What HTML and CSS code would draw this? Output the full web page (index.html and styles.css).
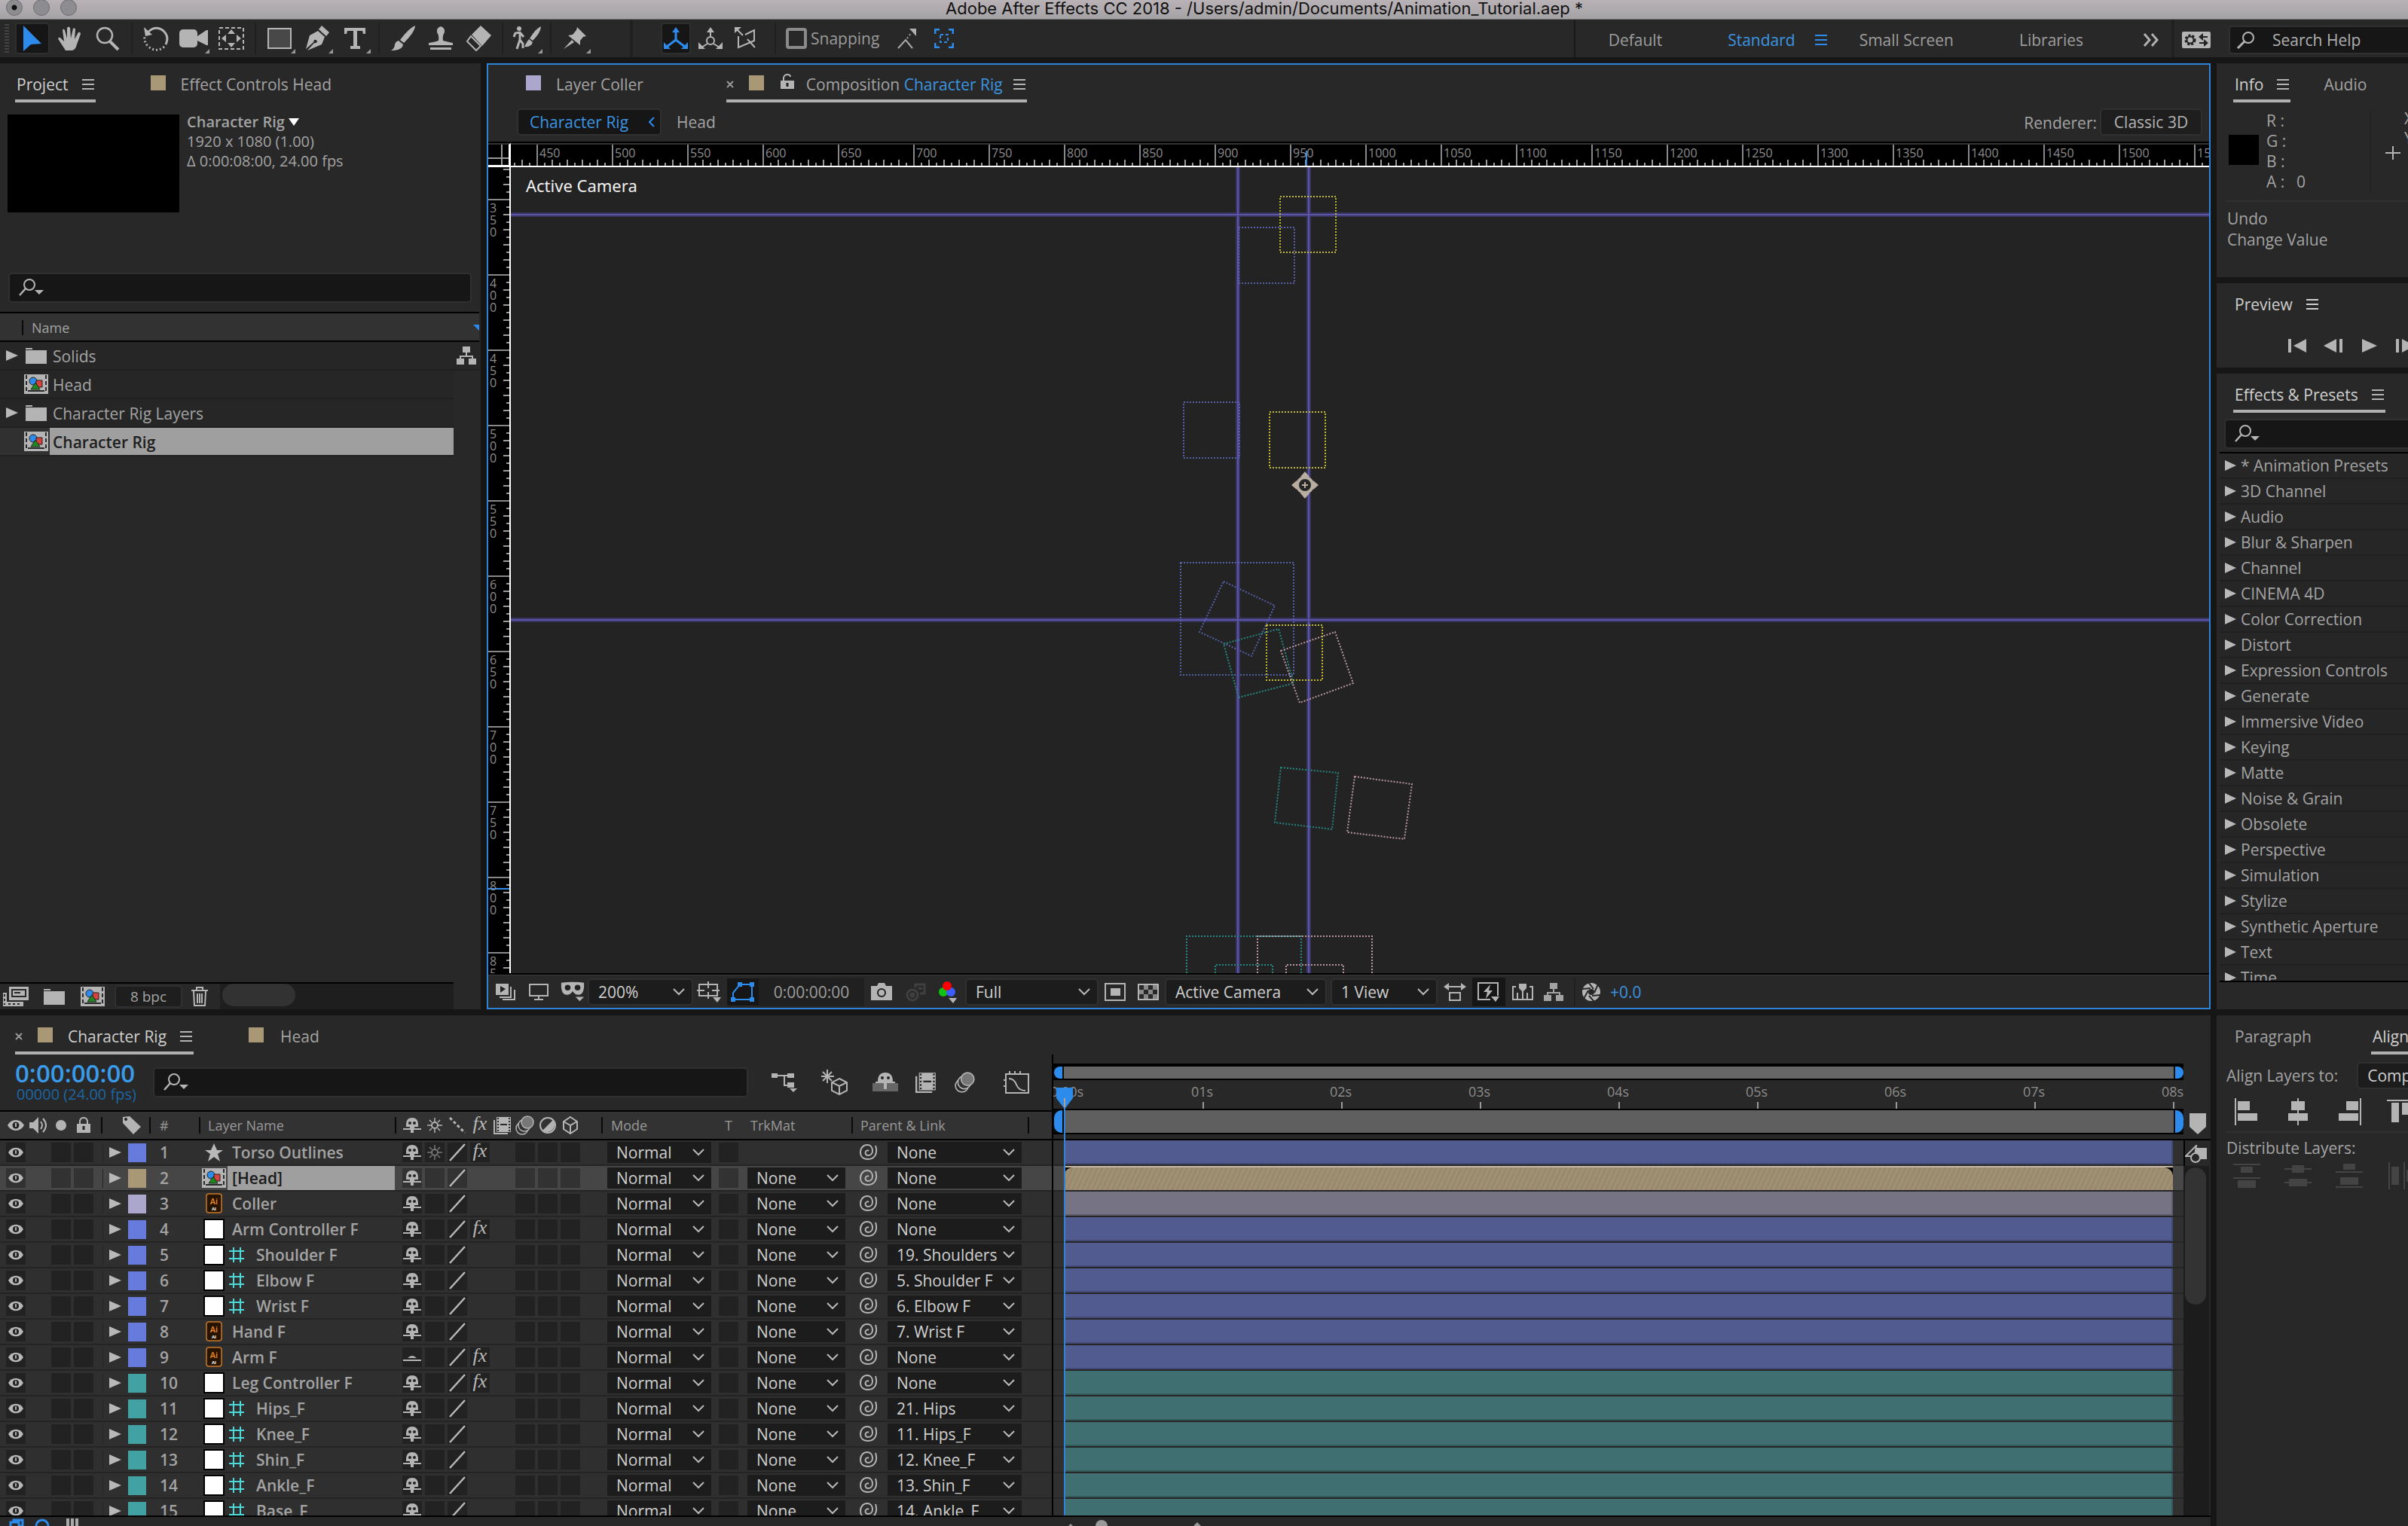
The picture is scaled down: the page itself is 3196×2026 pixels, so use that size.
FILE: index.html
```html
<!DOCTYPE html>
<html lang="en">
<head>
<meta charset="utf-8">
<title>Adobe After Effects CC 2018</title>
<link rel="stylesheet" href="styles.css">
</head>
<body>
<svg class="sprite" aria-hidden="true">
  <symbol id="i-menu" viewBox="0 0 16 14"><path d="M0 1h16M0 7h16M0 13h16" stroke="currentColor" stroke-width="2"/></symbol>
  <symbol id="i-search" viewBox="0 0 34 24"><circle cx="14" cy="8" r="7" fill="none" stroke="currentColor" stroke-width="2"/><path d="M9 13 1 22" stroke="currentColor" stroke-width="2.500"/><path d="M21 15h12l-6 6z" fill="currentColor"/></symbol>
  <symbol id="i-comp" viewBox="0 0 32 26"><path fill="#b4b4b4" d="M0 0h32v26H0z"/><path stroke="#2a2a2a" stroke-width="2" stroke-dasharray="5 3" d="M3 1v24M29 1v24"/><path stroke="#2a2a2a" stroke-width="2" d="M5 22h22"/><circle cx="12" cy="9" r="5" fill="#2d8ceb" stroke="#222"/><path fill="#d9413c" stroke="#222" d="M16 8h8v9h-8z"/><path fill="#1d8a1d" stroke="#222" d="M15 11l6 9H9z"/></symbol>
  <symbol id="i-folder" viewBox="0 0 28 22"><path fill="#b4b4b4" d="M0 1h9v2H0zM0 4h28v18H0z"/></symbol>
  <symbol id="i-flow" viewBox="0 0 26 24"><path fill="currentColor" d="M8 0h10v8H8zM0 16h10v8H0zM16 16h10v8H16z"/><path fill="none" stroke="currentColor" stroke-width="2" d="M13 8v5M5 17v-4h16v4"/></symbol>
  <symbol id="i-eye" viewBox="0 0 22 14"><path fill="#b8b8b8" d="M0 7Q4 0 11 0t11 7q-4 7-11 7T0 7z"/><circle cx="11" cy="7" r="4.500" fill="#242424"/><path d="M11 4v5" stroke="#b8b8b8" stroke-width="2"/></symbol>
  <symbol id="i-shy" viewBox="0 0 24 22"><path fill="#b4b4b4" d="M4 10Q4 1 12 1t8 9v3h-5v2h9v2H14v4h-4v-4H0v-2h9v-2H4z"/><circle cx="9" cy="8" r="2" fill="#222"/><circle cx="15" cy="8" r="2" fill="#222"/></symbol>
  <symbol id="i-shyon" viewBox="0 0 24 22"><path fill="#b4b4b4" d="M0 14h24v2H0zM6 12q6-6 12 0z"/></symbol>
  <symbol id="i-sun" viewBox="0 0 20 20"><circle cx="10" cy="10" r="4" fill="none" stroke="currentColor" stroke-width="2"/><path stroke="currentColor" stroke-width="1.500" d="M10 0v5M10 15v5M0 10h5M15 10h5M3 3l3 3M14 14l3 3M17 3l-3 3M3 17l3-3"/></symbol>
  <symbol id="i-slash" viewBox="0 0 24 24"><path stroke="#b8b8b8" stroke-width="2.500" d="M2 23 22 1"/></symbol>
  <symbol id="i-film" viewBox="0 0 24 24"><path fill="none" stroke="currentColor" stroke-width="2" d="M1 5v18h18"/><path fill="currentColor" d="M4 1h19v20H4z"/><path stroke="#2a2a2a" stroke-width="2" stroke-dasharray="2 2" d="M6 2v18M21 2v18"/><path stroke="#2a2a2a" stroke-width="2" d="M9 11h9"/></symbol>
  <symbol id="i-blur" viewBox="0 0 26 26"><circle cx="9" cy="17" r="8" fill="none" stroke="currentColor" stroke-width="1.500"/><circle cx="12" cy="13" r="8" fill="#333" stroke="currentColor" stroke-width="1.500"/><circle cx="16" cy="9" r="8" fill="#777" stroke="currentColor" stroke-width="1.500"/></symbol>
  <symbol id="i-cube" viewBox="0 0 22 24"><path fill="none" stroke="currentColor" stroke-width="2" d="M11 1l9 6v10l-9 6-9-6V7zM2 7l9 5 9-5M11 12v11"/></symbol>
  <symbol id="i-null" viewBox="0 0 32 28"><path fill="#fff" stroke="#000" stroke-width="2" d="M3 1h26v26H3z"/></symbol>
  <symbol id="i-star" viewBox="0 0 32 28"><path fill="#b8b8b8" d="M16 2l4 9h8l-7 5 3 10-8-6-8 6 3-10-7-5h8z"/></symbol>
  <symbol id="i-ai" viewBox="0 0 32 28"><rect x="6" y="1" width="20" height="25" rx="3" fill="#261300" stroke="#c77a25" stroke-width="1.500"/><text x="16" y="15" text-anchor="middle" font-size="11" font-weight="600" fill="#f08a24">Ai</text><text x="16" y="23" text-anchor="middle" font-size="6" font-weight="700" fill="#fff">AI</text></symbol>
  <symbol id="i-hash" viewBox="0 0 20 20"><path stroke="#4fd8d8" stroke-width="2" d="M6 0v20M15 0v20M0 5h20M0 15h20"/></symbol>
  <symbol id="i-spiral" viewBox="0 0 24 22"><path fill="none" stroke="#b4b4b4" stroke-width="2" d="M21 2C24 11 21 20 11 20 4 20 1 16 1 11 1 5 5 1 10 1c5 0 7 4 7 8 0 4-3 6-6 6-3 0-4-3-3-5 1-2 3-2 4-1"/></symbol>
  <symbol id="i-tri" viewBox="0 0 16 14"><path fill="#b8b8b8" d="M0 0l16 7-16 7z"/></symbol>
</svg>

<header class="titlebar">
  <div class="lights"><i class="light light--dot"></i><i class="light"></i><i class="light"></i></div>
  <h1 class="titlebar__text">Adobe After Effects CC 2018 - /Users/admin/Documents/Animation_Tutorial.aep *</h1>
</header>

<div class="toolbar">
  <i class="grip"></i>
  <button class="tool tool--on" aria-label="Selection"><svg width="24" height="34" viewBox="0 0 24 34"><path fill="#2d8ceb" d="M0 0l24 24-14 1-10 9z"/></svg></button>
  <button class="tool" aria-label="Hand"><svg width="32" height="34" viewBox="0 0 32 34"><path fill="currentColor" d="M10 33 1 19q-2-4 2-3l5 5L6 6q1-3 3 0l3 11V3q2-3 4 0l1 14 3-13q2-2 3 1l-1 13 5-9q3-1 3 2l-5 14q-2 8-7 8z"/></svg></button>
  <button class="tool" aria-label="Zoom"><svg width="32" height="32" viewBox="0 0 32 32"><circle cx="12" cy="12" r="10" fill="none" stroke="currentColor" stroke-width="2.500"/><path d="M19 20l11 11" stroke="currentColor" stroke-width="4"/></svg></button>
  <i class="sep"></i>
  <button class="tool" aria-label="Rotation"><svg width="34" height="34" viewBox="0 0 34 34" fill="none" stroke="currentColor" stroke-width="3"><path d="M7 8q10-9 20-1 8 8 3 18"/><path stroke-dasharray="2 3" d="M28 28q-11 9-22-1-5-6-4-12"/><path fill="currentColor" stroke="none" d="M1 2l2 12 9-2z"/></svg></button>
  <button class="tool tool--more" aria-label="Camera"><svg width="38" height="26" viewBox="0 0 38 26"><rect y="1" width="24" height="24" rx="5" fill="currentColor"/><path fill="currentColor" d="M24 10l12-8h2v20h-2l-12-6z"/></svg></button>
  <button class="tool" aria-label="Pan Behind"><svg width="34" height="30" viewBox="0 0 34 30"><path fill="none" stroke="currentColor" stroke-width="2" stroke-dasharray="5 3" d="M1 1h32v28H1z"/><path fill="currentColor" d="M17 3l5 6H12zM17 27l5-6H12zM4 15l6-5v10zM30 15l-6-5v10z"/></svg></button>
  <i class="sep"></i>
  <button class="tool tool--more" aria-label="Rectangle"><svg width="32" height="28" viewBox="0 0 32 28"><path fill="#484848" stroke="currentColor" stroke-width="2" d="M1 1h30v26H1z"/></svg></button>
  <button class="tool tool--more" aria-label="Pen"><svg width="32" height="34" viewBox="0 0 32 34"><path fill="currentColor" d="M22 0l10 9-4 5-10-9zM17 7l9 8-4 10L3 33l9-10q3 1 4-2-1-3-4-2l-1 3L1 31 6 13z"/></svg></button>
  <button class="tool tool--more" aria-label="Type"><svg width="28" height="28" viewBox="0 0 28 28"><path fill="currentColor" d="M0 0h28v8h-3l-1-4h-7v20h4v4H8v-4h4V4H4L3 8H0z"/></svg></button>
  <i class="sep"></i>
  <button class="tool" aria-label="Brush"><svg width="32" height="34" viewBox="0 0 32 34"><path fill="currentColor" d="M32 0q0 8-15 23l-5-4Q24 3 32 0zM10 20l6 5q-1 8-16 8 5-3 5-8 1-4 5-5z"/></svg></button>
  <button class="tool" aria-label="Clone Stamp"><svg width="32" height="32" viewBox="0 0 32 32"><path fill="currentColor" d="M16 0q6 2 5 8-3 4-2 11 8 2 13 3v3H0v-3q8-1 13-3 1-7-2-11-1-6 5-8zM2 28h28v3H2z"/></svg></button>
  <button class="tool" aria-label="Eraser"><svg width="34" height="34" viewBox="0 0 34 34"><path fill="currentColor" d="M20 0l14 13-12 14L8 12z"/><path fill="none" stroke="currentColor" stroke-width="2" d="M7 14l13 13-6 6L2 21z"/></svg></button>
  <i class="sep"></i>
  <button class="tool tool--more" aria-label="Roto Brush"><svg width="38" height="32" viewBox="0 0 38 32"><circle cx="9" cy="3" r="3" fill="currentColor"/><path fill="none" stroke="currentColor" stroke-width="3" d="M2 14l2-5 6-1 5 6M10 8v10L6 30M10 18l4 5v6"/><path fill="currentColor" d="M38 0q0 8-11 19l-4-3Q31 3 38 0zM22 17l5 4q-2 7-11 6 4-8 6-10z"/></svg></button>
  <i class="sep"></i>
  <button class="tool tool--more" aria-label="Puppet Pin"><svg width="30" height="30" viewBox="0 0 30 30"><path fill="currentColor" d="M18 0l12 12-4 1-4 5v6L6 11l6-1 5-6zM11 17l3 3L0 29z"/></svg></button>
  <i class="sep sep--wide"></i>
  <button class="tool tool--small tool--on" aria-label="Local axis"><svg width="32" height="30" viewBox="0 0 32 30" fill="none" stroke="#2d8ceb" stroke-width="3"><path d="M16 4v13L4 26M16 17l12 9"/><path fill="#2d8ceb" stroke="none" d="M16 0l5 7H11zM0 20v9h9zM32 20v9h-9z"/></svg></button>
  <button class="tool tool--small" aria-label="World axis"><svg width="32" height="30" viewBox="0 0 32 30" fill="none" stroke="currentColor" stroke-width="2"><circle cx="16" cy="18" r="5"/><path d="M16 4v9M12 22l-8 5M20 22l8 5"/><path fill="currentColor" stroke="none" d="M16 0l5 7H11zM0 20v9h9zM32 20v9h-9z"/></svg></button>
  <button class="tool tool--small" aria-label="View axis"><svg width="28" height="30" viewBox="0 0 28 30" fill="none" stroke="currentColor" stroke-width="2"><path d="M2 2l9 9M5 12v15l21-9V4L14 10M17 16l10 11"/><path fill="currentColor" stroke="none" d="M0 0h9L0 8z"/></svg></button>
  <i class="sep sep--gap"></i>
  <label class="snap"><input type="checkbox">Snapping</label>
  <svg class="snap-a" width="26" height="28" viewBox="0 0 26 28"><path fill="none" stroke="#a8a8a8" stroke-width="2" d="M1 27l10-11 9 11"/><path stroke="#a8a8a8" stroke-width="2" stroke-dasharray="2 3" d="M13 14l6-8"/><path fill="#b0b0b0" d="M16 1h9v10z"/></svg>
  <svg width="26" height="26" viewBox="0 0 26 26" fill="none" stroke="#2d8ceb" stroke-width="3"><path d="M1 7V1h6M19 1h6v6M25 19v6h-6M7 25H1v-6"/><path stroke-width="2" stroke-dasharray="4 3" d="M8 8h10v10H8z"/></svg>
  <nav class="spaces">
    <a href="#default">Default</a>
    <a href="#standard" class="is-on">Standard<svg width="18" height="14"><use href="#i-menu"/></svg></a>
    <a href="#small">Small Screen</a>
    <a href="#libraries">Libraries</a>
    <button class="bare" aria-label="More workspaces"><svg width="22" height="18" viewBox="0 0 22 18"><path fill="none" stroke="#b0b0b0" stroke-width="3" d="M2 1l7 8-7 8M12 1l7 8-7 8"/></svg></button>
  </nav>
  <div class="help">
    <button class="bare" aria-label="Workspace settings"><svg width="38" height="22" viewBox="0 0 38 22"><rect width="38" height="22" rx="2" fill="#b4b4b4"/><circle cx="11" cy="11" r="6" fill="none" stroke="#222" stroke-width="3" stroke-dasharray="3 2"/><circle cx="11" cy="11" r="4.500" fill="none" stroke="#222" stroke-width="2"/><path fill="#222" d="M22 7l6-5v4h6v2h-6v4zM35 15l-6-5v4h-6v2h6v4z"/></svg></button>
    <div class="help__box"><svg width="26" height="24" viewBox="0 0 26 24"><circle cx="16" cy="9" r="7" fill="none" stroke="#b4b4b4" stroke-width="2"/><path d="M11 14 2 23" stroke="#b4b4b4" stroke-width="3"/></svg><input type="search" aria-label="Search Help" placeholder="Search Help"></div>
  </div>
</div>

<main class="work">
  <section class="panel project">
    <div class="tabs">
      <a href="#project" class="tab is-on">Project<svg width="16" height="14"><use href="#i-menu"/></svg></a>
      <a href="#fx" class="tab tab--fx"><i class="chip sand"></i>Effect Controls Head</a>
    </div>
    <div class="asset">
      <div class="asset__thumb"></div>
      <div class="asset__info"><strong>Character Rig <svg width="14" height="10" viewBox="0 0 14 10"><path fill="#fff" d="M0 0h14L7 10z"/></svg></strong><span>1920 x 1080 (1.00)</span><span>Δ 0:00:08:00, 24.00 fps</span></div>
    </div>
    <label class="search project__search"><svg width="34" height="24"><use href="#i-search"/></svg><input type="search" aria-label="Search project"></label>
    <div class="list-head"><span>Name</span><svg width="8" height="8" viewBox="0 0 8 8"><path fill="#2d8ceb" d="M0 0h8v8z"/></svg></div>
    <ul class="items">
      <li><svg class="tri" width="16" height="14"><use href="#i-tri"/></svg><svg width="32" height="22"><use href="#i-folder"/></svg><span>Solids</span><svg class="items__flow" width="26" height="24"><use href="#i-flow"/></svg></li>
      <li><i class="tri"></i><svg width="32" height="26"><use href="#i-comp"/></svg><span>Head</span></li>
      <li><svg class="tri" width="16" height="14"><use href="#i-tri"/></svg><svg width="32" height="22"><use href="#i-folder"/></svg><span>Character Rig Layers</span></li>
      <li class="is-on"><i class="tri"></i><svg width="32" height="26"><use href="#i-comp"/></svg><span>Character Rig</span></li>
    </ul>
    <div class="project__foot">
      <button class="bare" aria-label="Interpret footage"><svg width="34" height="26" viewBox="0 0 34 26"><path fill="#b4b4b4" d="M8 0h26v18H8zM0 8h5v18H0zM5 20h22v6H5z"/><path stroke="#2a2a2a" stroke-width="2" stroke-dasharray="3 3" d="M2 10v14M7 23h18"/><path fill="none" stroke="#2a2a2a" stroke-width="2" d="M12 4h18v9H12zM15 8h8"/></svg></button>
      <button class="bare" aria-label="New folder"><svg width="28" height="22"><use href="#i-folder"/></svg></button>
      <button class="bare" aria-label="New composition"><svg width="34" height="26"><use href="#i-comp"/></svg></button>
      <button class="bpc">8 bpc</button>
      <button class="bare" aria-label="Delete"><svg width="22" height="26" viewBox="0 0 22 26"><path fill="none" stroke="#b4b4b4" stroke-width="2" d="M0 5h22M7 4V1h8v3M3 6l1 19h14l1-19M8 9v13M11 9v13M14 9v13"/></svg></button>
      <div class="hscroll"><i></i></div>
    </div>
  </section>

  <section class="panel comp">
    <div class="tabs">
      <a href="#layer" class="tab"><i class="chip lav"></i>Layer Coller</a>
      <a href="#comp" class="tab is-on comp__tab"><svg width="10" height="10" viewBox="0 0 10 10"><path stroke="#999" stroke-width="2" d="M1 1l8 8M9 1L1 9"/></svg><i class="chip sand"></i><svg class="lock" width="18" height="20" viewBox="0 0 18 20"><path fill="#b4b4b4" d="M0 9h18v11H0z"/><path fill="none" stroke="#b4b4b4" stroke-width="2" d="M4 9V5q1-4 5-4t4 3"/><path stroke="#222" stroke-width="3" d="M9 12v5"/></svg><span>Composition <b>Character Rig</b></span><svg width="16" height="14"><use href="#i-menu"/></svg></a>
    </div>
    <div class="crumbs">
      <button class="crumb">Character Rig<svg width="8" height="14" viewBox="0 0 8 14"><path fill="none" stroke="#2d8ceb" stroke-width="2" d="M7 1L1 7l6 6"/></svg></button>
      <a href="#head">Head</a>
      <span class="crumbs__r">Renderer:</span><button class="box">Classic 3D</button>
    </div>
    <div class="stage">
      <i class="corner"></i>
      <div class="hruler"><span>450</span><span>500</span><span>550</span><span>600</span><span>650</span><span>700</span><span>750</span><span>800</span><span>850</span><span>900</span><span>950</span><span>1000</span><span>1050</span><span>1100</span><span>1150</span><span>1200</span><span>1250</span><span>1300</span><span>1350</span><span>1400</span><span>1450</span><span>1500</span><span>1550</span></div>
      <div class="vruler"><span>350</span><span>400</span><span>450</span><span>500</span><span>550</span><span>600</span><span>650</span><span>700</span><span>750</span><span>800</span><span>850</span></div>
      <div class="view">
        <p>Active Camera</p>
        <svg class="canvas"><g transform="translate(-678 -222)" fill="none">
          <path stroke="#383660" stroke-width="6" d="M678 285h2400M678 823h2400M1643 222v1200M1737 222v1200"/>
          <path stroke="#5c55a8" stroke-width="2" d="M678 285h2400M678 823h2400M1643 222v1200M1737 222v1200"/>
          <g stroke-width="2" stroke-dasharray="2 2">
            <path stroke="#5560a8" d="M1644 302h74v74h-74zM1571 534h74v74h-74zM1567 747h150v149h-150zM1624 772l68 32-31 67-69-32z"/>
            <path stroke="#27857f" d="M1624 855l73-20 20 72-73 19zM1700 1019l76 7-8 75-76-9zM1575 1400v-157h152v157M1613 1400v-119h76v119"/>
            <path stroke="#b8959f" d="M1700 864l72-25 24 68-71 26zM1798 1031l76 10-10 73-76-9zM1669 1400v-157h152v157M1707 1400v-119h76v119"/>
            <path stroke="#c0b82e" d="M1699 261h74v74h-74zM1685 547h74v74h-74zM1681 830h74v73h-74z"/>
          </g>
          <path fill="#b8ada0" d="M1732 626l6 7h-12zM1732 662l6-7h-12zM1714 644l7-6v12zM1750 644l-7-6v12z"/><circle cx="1732" cy="644" r="10" fill="#262626" stroke="#b8ada0" stroke-width="4"/><path stroke="#b8ada0" stroke-width="2" d="M1728 644h8M1732 640v8"/>
        </g></svg>
      </div>
    </div>
    <div class="comp__foot">
      <button class="bare f1" aria-label="Always preview"><svg width="28" height="22" viewBox="0 0 28 22"><path fill="#b4b4b4" d="M0 0h17v15H0z"/><path fill="#222" d="M6 3l7 4-7 5z"/><path fill="none" stroke="#b4b4b4" stroke-width="2" d="M20 4v14H5M25 8v13H9"/></svg></button>
      <button class="bare f2" aria-label="Primary viewer"><svg width="26" height="22" viewBox="0 0 26 22"><path fill="none" stroke="#b4b4b4" stroke-width="2" d="M1 1h24v15H1zM13 16v4M7 21h12"/></svg></button>
      <button class="bare f3" aria-label="Mask view"><svg width="32" height="28" viewBox="0 0 34 28"><path fill="#b4b4b4" d="M1 1q16-2 32 0 1 17-8 17-5 0-8-5-3 5-8 5Q0 18 1 1zM21 21h12l-6 6z"/><circle cx="10" cy="8" r="4" fill="#222"/><circle cx="24" cy="8" r="4" fill="#222"/></svg></button>
      <select class="sel s1" aria-label="Magnification"><option>200%</option></select>
      <button class="bare f4" aria-label="Grid options"><svg width="32" height="28" viewBox="0 0 32 28"><path fill="none" stroke="#b4b4b4" stroke-width="2" d="M3 4h24v15H3zM15 0v9M15 14v9M0 12h10M20 12h10"/><path fill="#b4b4b4" d="M21 21h11l-5 7z"/></svg></button>
      <button class="bare f5" aria-label="Toggle mask path"><svg width="32" height="26" viewBox="0 0 32 26"><path fill="none" stroke="#2d8ceb" stroke-width="2" d="M3 23V14L12 3h16v20z"/><path fill="#2d8ceb" d="M9 0h6v6H9zM25 0h6v6h-6zM25 20h6v6h-6zM0 20h6v6H0z"/></svg></button>
      <button class="tc">0:00:00:00</button>
      <button class="bare f6" aria-label="Snapshot"><svg width="30" height="24" viewBox="0 0 30 24"><path fill="#b4b4b4" d="M1 4h8l2-4h8l2 4h8v19H1z"/><circle cx="15" cy="13" r="6" fill="#222"/><circle cx="15" cy="13" r="4" fill="#b4b4b4"/></svg></button>
      <button class="bare f7" aria-label="Show snapshot"><svg width="30" height="26" viewBox="0 0 30 26" fill="none" stroke="#404040" stroke-width="3"><circle cx="11" cy="17" r="7"/><circle cx="11" cy="17" r="2"/><path d="M15 7V3h12v12h-6M19 9q3-3 4 1"/></svg></button>
      <button class="bare f8" aria-label="Channels"><svg width="26" height="30" viewBox="0 0 26 30"><circle cx="7" cy="15" r="6" fill="#12c412"/><circle cx="17" cy="15" r="6" fill="#3c5cff"/><circle cx="12" cy="7" r="6" fill="#f00"/><path fill="#b4b4b4" d="M14 23h11l-5 7z"/></svg></button>
      <select class="sel s2" aria-label="Resolution"><option>Full</option></select>
      <button class="bare f9" aria-label="Region of interest"><svg width="28" height="24" viewBox="0 0 28 24"><path fill="none" stroke="#b4b4b4" stroke-width="2" d="M1 1h26v22H1z"/><path fill="#b4b4b4" d="M8 7h13v10H8z"/></svg></button>
      <button class="bare f10" aria-label="Transparency grid"><svg width="28" height="22" viewBox="0 0 28 22"><path fill="none" stroke="#b4b4b4" stroke-width="2" d="M1 1h26v20H1z"/><path fill="#888" d="M8 2h6v6H8zM20 2h6v6h-6zM2 8h6v6H2zM14 8h6v6h-6zM8 14h6v6H8zM20 14h6v6h-6z"/></svg></button>
      <select class="sel s3" aria-label="3D view"><option>Active Camera</option></select>
      <select class="sel s4" aria-label="View layout"><option>1 View</option></select>
      <button class="bare f11" aria-label="Pixel aspect"><svg width="30" height="24" viewBox="0 0 30 24"><path fill="none" stroke="#b4b4b4" stroke-width="2" d="M3 5h24M8 13h14v10H8z"/><path fill="#b4b4b4" d="M0 5l7-5v10zM30 5l-7-5v10z"/></svg></button>
      <button class="bare f12" aria-label="Fast previews"><svg width="30" height="26" viewBox="0 0 30 26"><path fill="none" stroke="#b4b4b4" stroke-width="2" d="M17 23H1V1h26v17"/><path fill="#b4b4b4" d="M17 3L8 13h5l-2 9 9-11h-5zM18 19h11l-5 7z"/></svg></button>
      <button class="bare f13" aria-label="Timeline"><svg width="28" height="22" viewBox="0 0 28 22"><path fill="none" stroke="#b4b4b4" stroke-width="2" d="M5 4H1v17h26V4h-4M7 12v8M14 6v14M20 12v8"/><path fill="#b4b4b4" d="M9 0h10v6l-5 5-5-5z"/></svg></button>
      <button class="bare f14" aria-label="Flowchart"><svg width="26" height="24"><use href="#i-flow"/></svg></button>
      <button class="bare f15" aria-label="Reset exposure"><svg width="26" height="26" viewBox="0 0 26 26"><circle cx="13" cy="13" r="8" fill="none" stroke="#b4b4b4" stroke-width="8"/><path stroke="#282828" stroke-width="2" fill="none" d="M1 9l11-1M9 0l7 9M22 3l-5 11M26 17l-12 1M17 26l-7-8M3 22l6-11"/></svg></button>
      <span class="exp">+0.0</span>
    </div>
  </section>

  <section class="panel timeline">
    <div class="tabs">
      <a href="#t1" class="tab is-on t1"><svg width="10" height="10" viewBox="0 0 10 10"><path stroke="#999" stroke-width="2" d="M1 1l8 8M9 1L1 9"/></svg><i class="chip sand"></i>Character Rig<svg class="t1m" width="16" height="14"><use href="#i-menu"/></svg></a>
      <a href="#t2" class="tab t2"><i class="chip sand"></i>Head</a>
    </div>
    <div class="layers">
      <div class="ctl">
        <div class="now"><strong>0:00:00:00</strong><span>00000 (24.00 fps)</span></div>
        <label class="search ctl__search"><svg width="34" height="24"><use href="#i-search"/></svg><input type="search" aria-label="Search layers"></label>
        <div class="ctl__icons">
          <svg width="34" height="26" viewBox="0 0 34 26"><path fill="none" stroke="#b4b4b4" stroke-width="2" d="M4 4h22M17 4v13h9"/><path fill="#b4b4b4" d="M0 1h8v6H0zM21 1h9v6h-9zM21 13h9v7h-9zM24 21h10l-5 5z"/></svg>
          <svg width="36" height="34" viewBox="0 0 36 34" fill="none" stroke="#b4b4b4" stroke-width="2"><path d="M8 0v18M0 9h17M2 3l12 12M14 3L2 15M24 12l10 5v11l-10 5-10-5V17zM14 17l10 5 10-5M24 22v11"/></svg>
          <svg width="34" height="26" viewBox="0 0 34 26"><path fill="#666" d="M0 14h34v11H0z"/><path fill="#b4b4b4" d="M7 12Q7 0 17 0t10 12h3v2H19v8h-4v-8H4v-2z"/><circle cx="13" cy="7" r="2" fill="#222"/><circle cx="21" cy="7" r="2" fill="#222"/></svg>
          <svg width="30" height="28"><use href="#i-film"/></svg>
          <svg width="30" height="28"><use href="#i-blur"/></svg>
          <svg class="graph" width="34" height="30" viewBox="0 0 34 30" fill="none" stroke="#b4b4b4" stroke-width="2"><path d="M3 4h30v25H3zM7 10q7 0 10 8t12 8M8 0v4M15 0v4M22 0v4M0 12h3M0 20h3"/></svg>
        </div>
      </div>
      <table class="grid">
        <colgroup><col class="c1"><col class="c2"><col class="c3"><col class="c4"><col class="c5"><col class="c6"><col class="c7"><col class="c8"><col class="c9"><col></colgroup>
        <thead><tr>
          <th class="cut"><div class="cells"><i><svg width="22" height="14"><use href="#i-eye"/></svg></i><i><svg width="24" height="22" viewBox="0 0 24 22"><path fill="#b4b4b4" d="M0 7h5l7-7v22l-7-7H0z"/><path fill="none" stroke="#b4b4b4" stroke-width="2" d="M15 6q4 5 0 10M18 2q8 9 0 18"/></svg></i><i><svg width="14" height="14" viewBox="0 0 14 14"><circle cx="7" cy="7" r="7" fill="#b4b4b4"/></svg></i><i><svg width="18" height="22" viewBox="0 0 18 22"><path fill="#b4b4b4" d="M0 9h18v12H0z"/><path fill="none" stroke="#b4b4b4" stroke-width="2" d="M4 9V5q1-4 5-4t5 4v4"/><path stroke="#222" stroke-width="3" d="M9 12v5"/></svg></i></div></th>
          <th class="cut tag"><svg width="24" height="24" viewBox="0 0 24 24"><path fill="#b4b4b4" d="M0 1l9-1 15 14-10 10L0 9z"/><circle cx="4" cy="4" r="2" fill="#222"/></svg></th>
          <th class="cut num">#</th>
          <th class="cut lname">Layer Name</th>
          <th class="cut"><div class="cells"><i><svg width="24" height="22"><use href="#i-shy"/></svg></i><i><svg width="20" height="20"><use href="#i-sun"/></svg></i><i><svg width="22" height="22" viewBox="0 0 22 22"><path fill="none" stroke="#b4b4b4" stroke-width="3" stroke-dasharray="4 3" d="M1 1l20 20"/></svg></i><i class="fx">fx</i><i><svg width="24" height="24"><use href="#i-film"/></svg></i><i><svg width="26" height="26"><use href="#i-blur"/></svg></i><i><svg width="22" height="22" viewBox="0 0 22 22"><circle cx="11" cy="11" r="10" fill="none" stroke="#b4b4b4" stroke-width="2"/><path fill="#b4b4b4" d="M18 4A10 10 0 0 1 4 18z"/></svg></i><i><svg width="22" height="24"><use href="#i-cube"/></svg></i></div></th>
          <th class="mode">Mode</th><th class="tcol">T</th><th class="cut trk">TrkMat</th><th class="cut par">Parent &amp; Link</th><th></th>
        </tr></thead>
        <tbody id="rows"></tbody>
      </table>
    </div>
    <div class="tracks">
      <div class="navbar"><i></i><b></b><i></i></div>
      <div class="ticks"><span>0:00s</span><span>01s</span><span>02s</span><span>03s</span><span>04s</span><span>05s</span><span>06s</span><span>07s</span><span>08s</span></div>
      <div class="workbar"><i></i><b></b><i></i></div>
      <div class="bars" id="bars"></div>
      <svg class="playhead" width="22" height="27" viewBox="0 0 22 27"><path fill="#2d8ceb" d="M0 0h22v14L12 27h-2L0 14z"/><path stroke="#b0a090" stroke-width="2" d="M11 14v13"/></svg>
      <i class="playline"></i>
    </div>
    <div class="rail">
      <svg class="rail__m" width="22" height="28" viewBox="0 0 22 28"><path fill="#b4b4b4" d="M0 0h22v18l-11 10L0 18z"/></svg>
      <div class="rail__c"><svg width="30" height="24" viewBox="0 0 30 24"><path fill="#b4b4b4" d="M14 4h15v15H14z"/><path fill="none" stroke="#b4b4b4" stroke-width="2" d="M15 1L1 15h12z"/><circle cx="14" cy="17" r="6" fill="#282828" stroke="#b4b4b4" stroke-width="2"/></svg></div>
      <div class="vscroll"><i></i></div>
    </div>
    <div class="timeline__foot">
      <svg width="20" height="16" viewBox="0 0 20 16"><path fill="none" stroke="#2d8ceb" stroke-width="3" d="M2 5h11v9H2zM6 5V2h12v8h-4"/></svg>
      <svg width="20" height="16" viewBox="0 0 20 16"><circle cx="10" cy="10" r="8" fill="none" stroke="#2d8ceb" stroke-width="3"/></svg>
      <svg width="16" height="16" viewBox="0 0 16 16"><path fill="#aaa" d="M0 0h4v16H0zM6 0h4v16H6zM12 0h4v16h-4z"/></svg>
      <svg class="zoomer" width="180" height="12" viewBox="0 0 180 12"><path fill="#999" d="M0 12l5-5 5 5z"/><circle cx="46" cy="10" r="8" fill="#999"/><path fill="#999" d="M166 12l7-7 7 7z"/></svg>
    </div>
  </section>

  <aside class="side">
    <section class="panel info">
      <div class="tabs"><a href="#info" class="tab is-on">Info<svg width="16" height="14"><use href="#i-menu"/></svg></a><a href="#audio" class="tab audio">Audio</a></div>
      <div class="rgba">
        <i class="rgba__chip"></i>
        <dl><dt>R :</dt><dd></dd><dt>G :</dt><dd></dd><dt>B :</dt><dd></dd><dt>A :</dt><dd>0</dd></dl>
        <svg width="20" height="18" viewBox="0 0 20 18"><path stroke="#b4b4b4" stroke-width="2" d="M10 0v18M0 9h20"/></svg>
        <div class="xy"><span>X</span><span>Y</span></div>
      </div>
      <p class="undo">Undo<br>Change Value</p>
    </section>
    <section class="panel preview">
      <h2>Preview<svg width="16" height="14"><use href="#i-menu"/></svg></h2>
      <div class="play">
        <button class="bare" aria-label="First frame"><svg width="24" height="18" viewBox="0 0 24 18"><path fill="#b4b4b4" d="M0 0h4v18H0zM24 0v18L7 9z"/></svg></button>
        <button class="bare" aria-label="Previous frame"><svg width="26" height="18" viewBox="0 0 26 18"><path fill="#b4b4b4" d="M17 0v18L0 9zM21 0h4v18h-4z"/></svg></button>
        <button class="bare" aria-label="Play"><svg width="20" height="18" viewBox="0 0 20 18"><path fill="#b4b4b4" d="M0 0l20 9-20 9z"/></svg></button>
        <button class="bare" aria-label="Next frame"><svg width="26" height="18" viewBox="0 0 26 18"><path fill="#b4b4b4" d="M0 0h4v18H0zM8 0l17 9-17 9z"/></svg></button>
      </div>
    </section>
    <section class="panel effects">
      <div class="tabs"><a href="#effects" class="tab is-on">Effects &amp; Presets<svg width="16" height="14"><use href="#i-menu"/></svg></a></div>
      <label class="search"><svg width="34" height="24"><use href="#i-search"/></svg><input type="search" aria-label="Search effects"></label>
      <ul>
        <li>* Animation Presets</li><li>3D Channel</li><li>Audio</li><li>Blur &amp; Sharpen</li><li>Channel</li><li>CINEMA 4D</li><li>Color Correction</li><li>Distort</li><li>Expression Controls</li><li>Generate</li><li>Immersive Video</li><li>Keying</li><li>Matte</li><li>Noise &amp; Grain</li><li>Obsolete</li><li>Perspective</li><li>Simulation</li><li>Stylize</li><li>Synthetic Aperture</li><li>Text</li><li>Time</li>
      </ul>
    </section>
    <section class="panel align">
      <div class="tabs"><a href="#para" class="tab">Paragraph</a><a href="#align" class="tab is-on align__tab">Align<svg width="16" height="14"><use href="#i-menu"/></svg></a></div>
      <div class="align__to"><label for="alignto">Align Layers to:</label><select class="sel" id="alignto"><option>Composition</option></select></div>
      <div class="align__row">
        <svg viewBox="0 0 36 36"><path fill="#b4b4b4" d="M2 0h2v36H2zM6 4h16v12H6zM6 20h26v10H6z"/></svg>
        <svg viewBox="0 0 36 36"><path fill="#b4b4b4" d="M17 0h2v36h-2zM9 4h18v12H9zM5 20h26v10H5z"/></svg>
        <svg viewBox="0 0 36 36"><path fill="#b4b4b4" d="M32 0h2v36h-2zM14 4h16v12H14zM4 20h26v10H4z"/></svg>
        <svg viewBox="0 0 36 36"><path fill="#b4b4b4" d="M0 2h36v2H0zM6 6h10v26H6zM20 6h10v16H20z"/></svg>
      </div>
      <p class="align__d">Distribute Layers:</p>
      <div class="align__row align__row--off">
        <svg viewBox="0 0 36 36"><path fill="#444" d="M0 2h36v2H0zM10 6h16v8H10zM0 20h36v2H0zM6 24h24v10H6z"/></svg>
        <svg viewBox="0 0 36 36"><path fill="#444" d="M0 8h36v2H0zM10 4h16v10H10zM0 26h36v2H0zM6 22h24v10H6z"/></svg>
        <svg viewBox="0 0 36 36"><path fill="#444" d="M10 2h16v8H10zM0 12h36v2H0zM6 20h24v10H6zM0 32h36v2H0z"/></svg>
        <svg viewBox="0 0 36 36"><path fill="#444" d="M2 0h2v36H2zM6 6h10v24H6zM22 0h2v36h-2zM26 10h10v16H26z"/></svg>
      </div>
    </section>
  </aside>
</main>
<script src="layers.js"></script>
</body>
</html>
```
FILE: styles.css
```css
* { box-sizing: border-box; }
body {
  margin: 0; height: 100vh; overflow: hidden;
  display: grid; grid-template-rows: 26px 50px minmax(0, 1fr); row-gap: 0;
  background: #161616; color: #a3a3a3;
  font: 21px/26px "Open Sans", "Noto Sans", sans-serif;
}
svg { display: block; flex: none; }
i { font-style: normal; }
a { color: inherit; text-decoration: none; }
h1, h2, p, ul, dl, dd { margin: 0; padding: 0; font-weight: 400; font-size: inherit; }
ul { list-style: none; }
button, input, select { font: inherit; color: inherit; background: none; border: 0; padding: 0; margin: 0; border-radius: 0; }
.sprite { position: absolute; width: 0; height: 0; }
.bare { display: flex; align-items: center; justify-content: center; flex: none; }

/* title bar */
.titlebar { display: grid; grid-template-columns: 1fr auto 1fr; background: linear-gradient(#b9b2b6, #a4a2a5); border-bottom: 1px solid #777; overflow: hidden; }
.lights { display: flex; gap: 14px; padding-left: 8px; }
.light { width: 22px; height: 22px; border-radius: 50%; background: #8d8c90; border: 1px solid #6e6d70; margin-top: -1px; }
.light--dot { background: radial-gradient(circle, #111 3px, #8d8c90 4px); }
.titlebar__text { grid-column: 2; margin-left: 160px; color: #111; font: 22px/22px Inter, Roboto, sans-serif; }

/* tool bar */
.toolbar { display: flex; align-items: center; background: #282828; color: #b4b4b4; overflow: hidden; }
.grip { width: 6px; height: 38px; margin: 0 6px; flex: none; background: repeating-linear-gradient(#444 0 2px, transparent 2px 4px); }
.tool { width: 46px; height: 42px; margin: 0 2px; display: flex; align-items: center; justify-content: center; border-radius: 4px; position: relative; flex: none; }
.tool--on { background: #161616; border: 2px solid #2e2e2e; }
.tool--more::after { content: ""; position: absolute; right: 2px; bottom: 1px; border: 3px solid transparent; border-right-color: #999; border-bottom-color: #999; }
.tool--small { width: 40px; margin: 0 3px; }
.sep { width: 2px; height: 42px; background: #202020; margin: 0 6px; flex: none; }
.sep--wide { width: 4px; margin: 0 34px 0 48px; height: 50px; }
.sep--gap { margin: 0 13px 0 16px; }
.snap { display: flex; align-items: center; gap: 5px; color: #9b9b9b; margin-right: 24px; }
.snap input { appearance: none; width: 28px; height: 28px; border: 4px solid #8a8a8a; border-radius: 4px; }
.snap-a { margin-right: 23px; }
.spaces { margin-left: auto; display: flex; align-items: center; gap: 87px; color: #9d9d9d; border-left: 2px solid #1a1a1a; height: 50px; padding: 4px 16px 0 44px; border-right: 4px solid #202020; }
.spaces a { white-space: nowrap; }
.spaces .is-on { display: flex; align-items: center; gap: 25px; color: #3b94e0; margin-right: -45px; }
.spaces .is-on svg { color: #2d8ceb; }
.spaces .bare { margin-left: -8px; }
.help { display: flex; align-items: center; gap: 24px; padding: 4px 0 0 10px; width: 310px; }
.help__box { display: flex; align-items: center; gap: 22px; flex: 1; height: 38px; background: #161616; border: 2px solid #303030; border-right: 0; border-radius: 4px 0 0 4px; padding-left: 8px; }
.help__box input { width: 100%; min-width: 0; outline: 0; }
.help__box input::placeholder { color: #b0b0b0; opacity: 1; }

/* panel frame */
.work {
  display: grid; padding-top: 8px; gap: 8px; min-height: 0;
  grid-template-columns: minmax(0, 638fr) minmax(0, 2288fr) minmax(0, 254fr);
  grid-template-rows: minmax(0, 1256fr) minmax(0, 678fr);
}
.panel { background: #282828; display: flex; flex-direction: column; min-width: 0; min-height: 0; overflow: hidden; position: relative; }
.tabs { display: flex; height: 52px; padding: 8px 0 0 20px; flex: none; white-space: nowrap; }
.tab { display: flex; align-items: center; border-bottom: 4px solid transparent; padding: 0 2px; }
.tab.is-on { color: #cfcfcf; border-bottom-color: #b0b0b0; }
.tab > svg:last-child { margin-left: 18px; color: #b4b4b4; }
.chip { width: 20px; height: 20px; margin-right: 20px; margin-top: -4px; }
.sand { background: #a89876; }
.lav { background: #aba6cb; }
.search { display: flex; align-items: center; flex: none; height: 40px; background: #161616; border: 2px solid #303030; border-radius: 5px; color: #b4b4b4; padding-left: 12px; }
.search input { flex: 1; min-width: 0; outline: 0; }
.sel {
  appearance: none; height: 36px; padding: 0 12px; color: #cfcfcf; border: 2px solid #303030; border-radius: 5px; cursor: default;
  background: #1c1c1c url("data:image/svg+xml,%3Csvg xmlns='http://www.w3.org/2000/svg' width='16' height='10'%3E%3Cpath d='M1 1l7 7 7-7' fill='none' stroke='%23b8b8b8' stroke-width='2'/%3E%3C/svg%3E") no-repeat right 9px center;
}
.box { height: 36px; background: #1e1e1e; border: 2px solid #303030; border-radius: 5px; color: #b4b4b4; }

/* project */
.tab--fx { margin-left: 71px; }
.asset { display: flex; gap: 10px; padding: 16px 0 0 10px; }
.asset__thumb { width: 228px; height: 130px; background: #000; }
.asset__info { display: flex; flex-direction: column; font-size: 20px; margin-top: -3px; }
.asset__info strong { display: flex; align-items: center; gap: 5px; font-weight: 600; }
.project__search { margin: 80px 12px 12px 11px; }
.list-head { flex: none; display: flex; align-items: center; justify-content: space-between; height: 40px; background: #323232; border: solid #000; border-width: 2px 0; margin-right: 2px; font-size: 18px; padding: 2px 0 0 29px; }
.list-head span { border-left: 2px solid #0a0a0a; line-height: 20px; padding-left: 11px; }
.items { flex: 1; overflow: hidden; margin-right: 36px; }
.items li { display: flex; align-items: center; height: 38px; border-bottom: 2px solid #202020; background: #262626; position: relative; }
.items .tri { width: 16px; margin: 0 8px; flex: none; }
.items span { padding: 2px 0 0 4px; margin-left: 2px; flex: 1; line-height: 34px; }
.items .is-on { background: #303030; }
.items .is-on span { background: #9f9f9f; color: #1e1e1e; font-weight: 600; }
.items li:first-child { margin-right: -36px; padding-right: 36px; }
.items__flow { color: #b4b4b4; margin-right: -30px; }
.items { margin-right: 0; padding-right: 36px; }
.project__foot { display: flex; align-items: center; height: 36px; border-top: 2px solid #000; padding-left: 4px; gap: 20px; margin-right: 36px; }
.bpc { width: 90px; height: 30px; border: 2px solid #303030; border-radius: 5px; background: #1e1e1e; font-size: 19px; margin: 0 -8px 0 -8px; }
.hscroll { flex: 1; align-self: stretch; background: #1e1e1e; margin-left: -4px; padding-left: 3px; }
.hscroll i { display: block; width: 97px; height: 30px; border-radius: 15px; background: #323232; }

/* composition */
.comp::after { content: ""; position: absolute; inset: 0; border: 2px solid #2d83d8; pointer-events: none; }
.comp .tabs { padding-left: 50px; }
.comp__tab { margin-left: 108px; padding: 0 2px 0 0; }
.comp .comp__tab { color: #a3a3a3; }
.comp__tab .chip { margin-left: 20px; }
.comp__tab .lock { margin: -8px 16px 0 2px; }
.comp__tab b { font-weight: 400; color: #3b94e0; }
.comp__tab > svg:last-child { margin-left: 14px; }
.crumbs { display: flex; align-items: center; padding: 0 11px 0 40px; height: 52px; }
.crumb { display: flex; align-items: center; justify-content: space-between; width: 192px; height: 36px; padding: 0 7px 0 15px; border: 2px solid #303030; border-radius: 5px; background: #161616; color: #3b94e0; margin-right: 20px; }
.crumbs__r { margin-left: auto; margin-right: 4px; padding-top: 2px; }
.crumbs .box { width: 136px; }
.stage { flex: 1; min-height: 0; display: grid; grid-template-columns: 30px 1fr; grid-template-rows: 32px minmax(0, 1fr); border-top: 2px solid #000; border-bottom: 2px solid #000; padding: 0 2px; overflow: hidden; }
.corner { border-right: 3px solid #fff; border-bottom: 3px solid #fff; background: linear-gradient(#999, #999) 17px 0 / 2px 100% no-repeat, linear-gradient(#999, #999) 0 17px / 100% 2px no-repeat, #000; border-top: 2px solid #333; }
.hruler, .vruler { display: flex; overflow: hidden; color: #8c8c8c; font-size: 16px; line-height: 16px; }
.hruler {
  border-top: 2px solid #333; border-bottom: 2px solid #fff; padding-left: 34px;
  background: linear-gradient(90deg, #2d8ceb 2px, transparent 0) 1055px 8px / 2px 20px no-repeat,
    linear-gradient(90deg, #999 2px, transparent 0) 14px 20px / 20px 8px repeat-x,
    linear-gradient(90deg, #999 2px, transparent 0) 4px 24px / 10px 4px repeat-x, #000;
}
.hruler span { flex: 0 0 100px; border-left: 2px solid #888; padding: 3px 0 0 2px; }
.vruler {
  flex-direction: column; border-right: 2px solid #fff; padding-top: 42px;
  background: linear-gradient(#2d8ceb, #2d8ceb) 0 957px / 28px 2px no-repeat,
    linear-gradient(#999 2px, transparent 0) 20px 2px / 8px 20px repeat-y,
    linear-gradient(#999 2px, transparent 0) 24px 2px / 4px 10px repeat-y, #000;
}
.vruler span { flex: 0 0 100px; border-top: 2px solid #888; width: 28px; padding: 2px 16px 0 2px; word-break: break-all; }
.view { background: #232323; position: relative; overflow: hidden; }
.view p { padding: 11px 0 0 20px; color: #f2f2f2; font-family: "Noto Sans", sans-serif; font-size: 22px; }
.canvas { position: absolute; inset: 0; width: 100%; height: 100%; }
.comp__foot { flex: none; display: flex; align-items: center; height: 46px; padding: 0 0 2px 12px; border-top: 1px solid #3a3a3a; }
.f1, .f2 { margin-right: 16px; } .f3 { margin-right: 4px; }
.s1 { width: 140px; margin-right: 5px; } .f4 { margin-right: 8px; }
.f5 { width: 42px; height: 36px; background: #161616; }
.tc { width: 140px; height: 38px; background: #202020; color: #9d9d9d; margin-right: 8px; }
.f6, .f7 { margin-right: 15px; } .f8 { margin-right: 10px; }
.s2 { width: 177px; margin-right: 8px; } .f9 { margin-right: 16px; } .f10 { margin-right: 8px; }
.s3 { width: 215px; margin-right: 5px; } .s4 { width: 142px; margin-right: 8px; }
.f11 { margin-right: 8px; } .f12 { width: 44px; height: 38px; background: #161616; margin-right: 9px; }
.f13, .f14 { margin-right: 14px; }
.f15 { border-left: 2px solid #202020; padding: 6px 0 6px 8px; margin-right: 12px; }
.exp { color: #3b94e0; }

/* timeline */
.timeline { grid-column: 1 / 3; display: grid; grid-template-columns: 1396px minmax(0, 1fr) 36px; grid-template-rows: 52px minmax(0, 1fr) 14px; }
.timeline .tabs, .timeline__foot { grid-column: 1 / -1; }
.t1 { padding: 0 2px 0 0; } .t1 .chip { margin-left: 20px; } .t1 > .t1m { margin-left: 17px; }
.t2 { margin-left: 71px; } .t2 .chip { margin-right: 22px; }
.layers { overflow: hidden; }
.ctl { display: flex; align-items: center; height: 74px; padding-left: 20px; }
.now { width: 183px; display: flex; flex-direction: column; white-space: nowrap; }
.now strong { font-size: 33px; line-height: 32px; font-weight: 600; color: #3a9be8; }
.now span { font-size: 20px; line-height: 24px; color: #1b66a3; padding-left: 2px; }
.ctl__search { width: 790px; }
.ctl__icons { display: flex; align-items: center; flex: 1; padding: 0 30px 0 31px; color: #b4b4b4; gap: 22px; }
.ctl__icons svg:nth-child(1), .ctl__icons svg:nth-child(2) { margin-right: 10px; }
.ctl__icons .graph { margin-left: auto; }
.grid { width: 100%; table-layout: fixed; border-spacing: 0; background: #2f2f2f; }
.c1 { width: 136px; } .c2 { width: 64px; } .c3 { width: 66px; } .c4 { width: 260px; } .c5 { width: 274px; }
.c6 { width: 148px; } .c7 { width: 38px; } .c8 { width: 146px; } .c9 { width: 234px; }
.grid th { height: 40px; padding: 0; border: solid #000; border-width: 2px 0; background: #323232; font-size: 18px; font-weight: 400; text-align: left; color: #999; }
.grid .cut { background: linear-gradient(#0a0a0a, #0a0a0a) right center / 2px 22px no-repeat, #323232; }
.grid th.tag { padding-left: 27px; } .grid .num { padding-left: 12px; } .grid th.lname { padding-left: 10px; }
.grid th.mode { padding-left: 11px; } .grid th.tcol { padding-left: 14px; } .grid th.trk, .grid th.par { padding-left: 10px; }
.grid td { height: 34px; padding: 0; border-bottom: 2px solid #242424; }
.cells { display: flex; gap: 4px; padding-left: 8px; color: #b4b4b4; }
.cells i { width: 26px; height: 26px; display: flex; align-items: center; justify-content: center; flex: none; }
td .cells i.on { background: #222; }
.cells .dim { color: #777; }
.cells i.fx { font: italic 26px/20px "Liberation Serif", serif; color: #b8b8b8; padding-bottom: 4px; }
.mark { display: flex; align-items: center; gap: 9px; padding-left: 8px; border-left: 1px solid #242424; }
.mark i { width: 24px; height: 25px; }
td.num, .who span { font-weight: 600; }
.who { display: flex; align-items: center; padding-left: 2px; height: 32px; }
.who span { flex: 1; margin-left: 2px; padding-left: 6px; line-height: 32px; margin-right: 2px; }
.who .hash + span { padding-left: 14px; }
.who .hash { margin-left: 4px; }
.lsel { height: 28px; border: 0; border-radius: 0; padding: 0 12px; background-position: right 9px center; display: block; background-color: #1c1c1c; }
.lsel--m { width: 138px; margin-left: 6px; } .lsel--t { width: 130px; margin-left: 6px; }
.link { display: flex; align-items: center; gap: 13px; padding-left: 9px; } .lsel--p { width: 178px; }
.tbox { display: block; width: 26px; height: 26px; margin-left: 6px; background: #222; }
.grid .is-on td { background: #464646; }
.grid .is-on i.on, .is-on .tbox { background: #323232; }
.grid .is-on .who span { background: #9f9f9f; color: #1a1a1a; }

.tracks { position: relative; padding-top: 12px; overflow: hidden; border-left: 2px solid #000; }
.navbar, .workbar { display: flex; gap: 2px; padding-left: 1px; background: #0a0a0a; }
.navbar { height: 22px; border: solid #000; border-width: 4px 0 2px; }
.navbar i, .workbar i { width: 11px; background: #2d8ceb; border-radius: 10px 0 0 10px; }
.navbar b, .workbar b { flex: 1; background: #666; }
.navbar i:last-child, .workbar i:last-child { border-radius: 0 10px 10px 0; }
.ticks { display: flex; height: 38px; padding-left: 14px; }
.ticks span { flex: 1; font-size: 18px; line-height: 30px; color: #8c8c8c; background: linear-gradient(#999, #999) 0 29px / 2px 9px no-repeat; text-indent: -15px; }
.ticks span:first-child { text-indent: -18px; background: none; }
.ticks span:last-child { flex: 0 0 14px; }
.workbar { height: 34px; border: solid #000; border-width: 2px 0; }
.workbar b { background: #5f5f5f; }
.bars { border-top: 2px solid #000; margin-top: 6px; background: #303030; }
.bar { height: 34px; padding-right: 14px; padding-left: 14px; border-bottom: 2px solid #262626; }
.bar i { display: block; height: 32px; border: solid rgba(0, 0, 0, .18); border-width: 0 2px 2px 0; }
.bar.is-on { background: #484848; }
.bar.is-on i { border: 0; border-top: 2px solid #c6b7a8; background: #000; }
.bar.is-on i::after { content: ""; display: block; height: 30px; border-radius: 12px 12px 0 0; background: repeating-linear-gradient(115deg, #a19174 0 3px, #998a6d 3px 6px); }
.b-blue { background: #525b90; } .b-lav { background: #757384; } .b-teal { background: #3f6f70; }
.blue { background: #667bdc; } .teal { background: #41a1a3; }
.playhead { position: absolute; left: 4px; top: 44px; }
.playline { position: absolute; left: 14px; top: 70px; bottom: 0; width: 2px; background: #2d83d8; }
.rail { display: flex; flex-direction: column; padding-top: 78px; }
.rail__m { margin: 0 0 6px 8px; }
.rail__c { height: 36px; border-top: 2px solid #000; border-left: 2px solid #000; padding-top: 6px; flex: none; }
.vscroll { flex: 1; background: #1c1c1c; padding: 2px 4px 0 2px; margin-right: 2px; }
.vscroll i { display: block; height: 182px; border-radius: 15px; background: #333; }
.timeline__foot { display: flex; gap: 14px; padding: 2px 0 0 12px; border-top: 2px solid #000; overflow: hidden; }
.timeline__foot svg:nth-child(3) { margin-left: 8px; }
.timeline__foot .zoomer { margin-left: 1298px; }

/* right column */
.side { grid-column: 3; grid-row: 1 / 3; display: grid; gap: 8px; grid-template-rows: 284px 112px minmax(0, 844fr) minmax(0, 678fr); min-height: 0; white-space: nowrap; }
.side .panel { padding-left: 2px; }
.audio { margin-left: 42px; }
.rgba { display: flex; align-items: center; height: 132px; border-bottom: 2px solid #303030; margin-left: 10px; padding: 10px 0 10px 4px; }
.rgba__chip { width: 40px; height: 40px; background: #000; margin-top: -4px; flex: none; }
.rgba dl { display: grid; grid-template-columns: 40px 97px; padding-left: 10px; border-right: 2px solid #222; flex: none; }
.rgba dd { height: 27px; }
.rgba svg { margin: 4px 5px 0 19px; }
.xy { display: flex; flex-direction: column; align-self: flex-start; margin-top: -2px; }
.undo { padding: 8px 0 0 12px; line-height: 28px; }
.preview h2 { display: flex; align-items: center; gap: 18px; height: 56px; padding-left: 22px; color: #cfcfcf; }
.play { display: flex; gap: 22px; padding: 18px 0 0 92px; }
.play .bare { width: 26px; }
.effects .search { margin: 8px 0 4px 8px; border-right: 0; border-radius: 5px 0 0 5px; }
.effects ul { flex: 1; border: solid #000; border-width: 2px 0; margin: 0 0 36px 2px; overflow: hidden; min-height: 0; background: #262626; }
.effects li { height: 34px; padding-left: 28px; border-bottom: 2px solid #202020; display: flex; align-items: center; }
.effects li::before { content: ""; margin: 0 6px 0 -21px; border: solid transparent; border-width: 7px 0 7px 15px; border-left-color: #b8b8b8; }
.align__tab { margin-left: 77px; }
.align__to { display: flex; align-items: center; gap: 25px; padding: 10px 0 0 11px; }
.align__to .sel { width: 170px; flex: none; }
.align__row { display: flex; gap: 32px; padding: 12px 0 8px 20px; }
.align__row svg { width: 36px; height: 36px; }
.align__d { border-top: 2px solid #303030; margin-left: 10px; padding: 7px 0 0 1px; }
.align__row--off { padding-top: 6px; }
```
FILE: layers.js
```js
const layers = [
  ["Torso Outlines", "blue", "star", "None", "sf"],
  ["[Head]", "sand", "comp", "None", ""],
  ["Coller", "lav", "ai", "None", ""],
  ["Arm Controller F", "blue", "null", "None", "f"],
  ["Shoulder F", "blue", "null", "19. Shoulders", "#"],
  ["Elbow F", "blue", "null", "5. Shoulder F", "#"],
  ["Wrist F", "blue", "null", "6. Elbow F", "#"],
  ["Hand F", "blue", "ai", "7. Wrist F", ""],
  ["Arm F", "blue", "ai", "None", "fh"],
  ["Leg Controller F", "teal", "null", "None", "f"],
  ["Hips_F", "teal", "null", "21. Hips", "#"],
  ["Knee_F", "teal", "null", "11. Hips_F", "#"],
  ["Shin_F", "teal", "null", "12. Knee_F", "#"],
  ["Ankle_F", "teal", "null", "13. Shin_F", "#"],
  ["Base_F", "teal", "null", "14. Ankle_F", "#"]
];
const icon = (id, w, h, cls = "") => `<svg class="${cls}" width="${w}" height="${h}"><use href="#i-${id}"/></svg>`;
const select = (kind, label, value) =>
  `<select class="sel lsel lsel--${kind}" aria-label="${label}"><option>${value}</option></select>`;

const row = ([name, color, type, parent, flags], i) => `
<tr class="${i === 1 ? "is-on" : ""}">
  <td><div class="cells"><i class="on">${icon("eye", 20, 14)}</i><i></i><i class="on"></i><i class="on"></i></div></td>
  <td><div class="mark">${icon("tri", 16, 14)}<i class="${color}"></i></div></td>
  <td class="num">${i + 1}</td>
  <td><div class="who">${icon(type, 32, type === "comp" ? 26 : 28)}${flags.includes("#") ? icon("hash", 20, 20, "hash") : ""}<span>${name}</span></div></td>
  <td><div class="cells"><i class="on">${icon(flags.includes("h") ? "shyon" : "shy", 24, 22)}</i><i class="on dim">${flags.includes("s") ? icon("sun", 20, 20) : ""}</i><i class="on">${icon("slash", 24, 24)}</i>${flags.includes("f") ? '<i class="on fx">fx</i>' : "<i></i>"}<i></i><i class="on"></i><i class="on"></i><i class="on"></i></div></td>
  <td>${select("m", "Mode", "Normal")}</td>
  <td><i class="tbox"></i></td>
  <td>${i ? select("t", "Track matte", "None") : ""}</td>
  <td><div class="link">${icon("spiral", 24, 22)}${select("p", "Parent", parent)}</div></td>
  <td></td>
</tr>`;

document.getElementById("rows").innerHTML = layers.map(row).join("");
document.getElementById("bars").innerHTML = layers
  .map((l, i) => `<div class="bar ${i === 1 ? "is-on" : ""}"><i class="${i === 1 ? "" : "b-" + l[1]}"></i></div>`)
  .join("");
```
